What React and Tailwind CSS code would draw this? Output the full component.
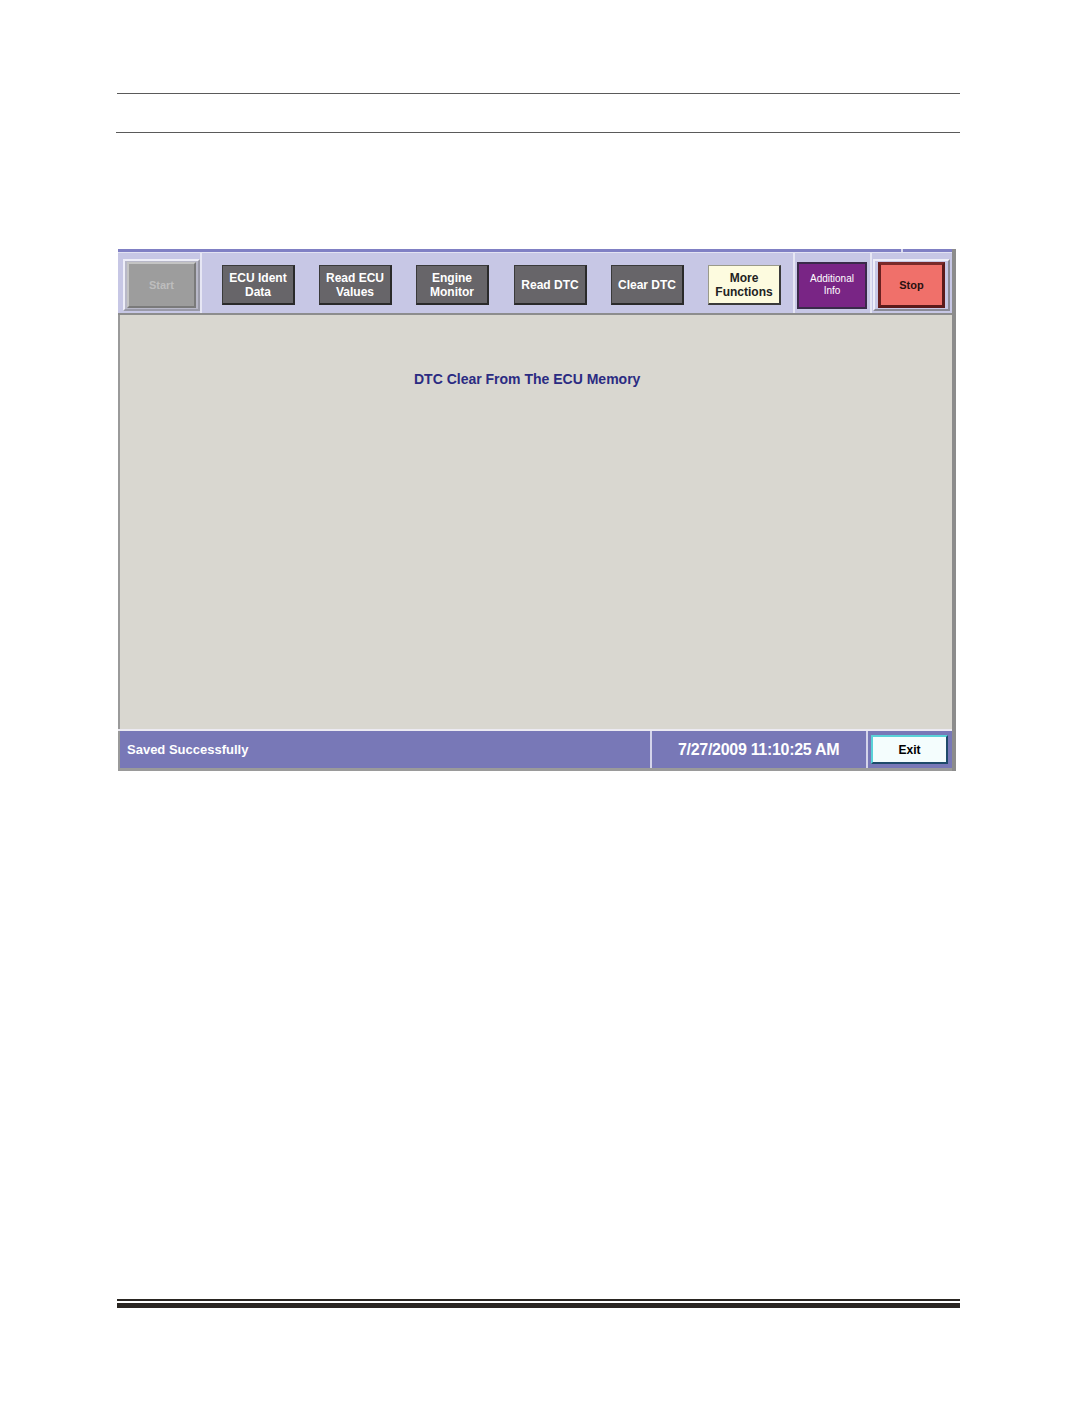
import React from "react";

const font = { fontFamily: '"Liberation Sans", Arial, sans-serif' };

function DarkBtn({ children, className = "" }) {
  return (
    <div
      className={`w-[73px] h-[40px] flex items-center justify-center text-center bg-[#676569] border border-[#3a3a3a] border-r-2 border-b-2 border-r-[#2a2a2a] border-b-[#2a2a2a] text-white text-[12px] font-bold leading-[14px] ${className}`}
    >
      {children}
    </div>
  );
}

function Sep({ className = "" }) {
  return <div className={`w-[2px] h-[60px] -mt-[4px] bg-[#e6e6f4] ${className}`} />;
}

export default function App() {
  return (
    <div className="w-[1075px] h-[1424px] bg-white relative" style={font}>
      <div className="pt-[93px] pl-[117px]">
        <div className="w-[843px] border-t border-[#5a5a5a]" />
        <div className="w-[844px] -ml-[1px] mt-[38px] border-t border-[#5a5a5a]" />

        {/* Window */}
        <div className="mt-[116px] ml-[1px] w-[838px] h-[522px] flex flex-col bg-[#d9d7d0] border-r-[4px] border-r-[#8c8c8c]">
          {/* top strip */}
          <div className="h-[3px] bg-[#8080c4] flex">
            <div className="ml-[783px] w-[2px] bg-[#d8d8ee]" />
          </div>
          <div className="h-[1px] bg-[#e2e2f2]" />
          {/* toolbar */}
          <div className="h-[62px] pt-[4px] bg-[#c7c7e5] flex items-center border-b-2 border-b-[#8d8d8d]">
            {/* Start frame */}
            <div className="ml-[5px] w-[77px] h-[52px] flex items-center justify-center border-2 border-[#eeeef8] border-r-[#9a9aa8] border-b-[#9a9aa8] bg-[#b8b8c8]">
              <div className="w-[69px] h-[46px] flex items-center justify-center bg-[#9d9d9d] border-2 border-[#c4c4c4] border-r-[#7a7a7a] border-b-[#7a7a7a] text-[#bdbdbd] text-[11px] font-bold">
                Start
              </div>
            </div>
            <Sep />
            <DarkBtn className="ml-[20px]">
              ECU Ident
              <br />
              Data
            </DarkBtn>
            <DarkBtn className="ml-[24px]">
              Read ECU
              <br />
              Values
            </DarkBtn>
            <DarkBtn className="ml-[24px]">
              Engine
              <br />
              Monitor
            </DarkBtn>
            <DarkBtn className="ml-[25px]">Read DTC</DarkBtn>
            <DarkBtn className="ml-[24px]">Clear DTC</DarkBtn>
            <div className="ml-[24px] w-[73px] h-[40px] flex items-center justify-center text-center bg-[#fdfbdf] border border-[#9a9a8a] border-r-2 border-b-2 border-r-[#3a3a3a] border-b-[#3a3a3a] text-[#222] text-[12px] font-bold leading-[14px]">
              More
              <br />
              Functions
            </div>
            <Sep className="ml-[12px]" />
            <div className="ml-[2px] w-[70px] h-[47px] flex items-center justify-center text-center bg-[#792585] border-2 border-[#3a2a4a] text-white text-[10px] leading-[12px]">
              Additional
              <br />
              Info
            </div>
            <Sep className="ml-[3px]" />
            <div className="ml-[1px] w-[77px] h-[52px] flex items-center justify-center border-2 border-[#eeeef8] border-r-[#8a8a96] border-b-[#8a8a96]">
              <div className="w-[67px] h-[46px] flex items-center justify-center bg-[#f0706a] border-[3px] border-[#5a1a1a] border-t-[#7a2a2a] border-l-[#6a2020] text-[#2a1010] text-[11px] font-bold">
                Stop
              </div>
            </div>
          </div>
          {/* content */}
          <div className="flex-1 border-l-2 border-l-[#9a9a9a] pt-[56px]">
            <div className="ml-[294px] text-[14px] font-bold text-[#2b2b82] leading-[17px]">
              DTC Clear From The ECU Memory
            </div>
          </div>
          {/* status bar */}
          <div className="h-[2px] bg-[#eceaf2]" />
          <div className="h-[37px] bg-[#7878b7] flex items-center border-l-2 border-l-[#9a9a9a]">
            <div className="w-[530px] pl-[7px] text-white text-[13px] font-bold">
              Saved Successfully
            </div>
            <div className="w-[2px] h-[37px] bg-[#d4d4ea]" />
            <div className="w-[214px] pl-[26px] text-white text-[16px] font-bold tracking-[-0.3px]">
              7/27/2009 11:10:25 AM
            </div>
            <div className="w-[2px] h-[37px] bg-[#d4d4ea]" />
            <div className="ml-[3px] w-[77px] h-[29px] flex items-center justify-center bg-[#f4fdfd] border-2 border-[#5ad2d8] border-r-[#1e4a6a] border-b-[#1e4a6a] text-black text-[12px] font-bold">
              Exit
            </div>
          </div>
          <div className="h-[3px] bg-[#9a9a9a]" />
        </div>
      </div>

      {/* footer rules */}
      <div className="absolute left-[117px] top-[1299px] w-[843px]">
        <div className="h-[2px] bg-[#2a2622]" />
        <div className="h-[2px] bg-white" />
        <div className="h-[5px] bg-[#2a2622]" />
      </div>
    </div>
  );
}
